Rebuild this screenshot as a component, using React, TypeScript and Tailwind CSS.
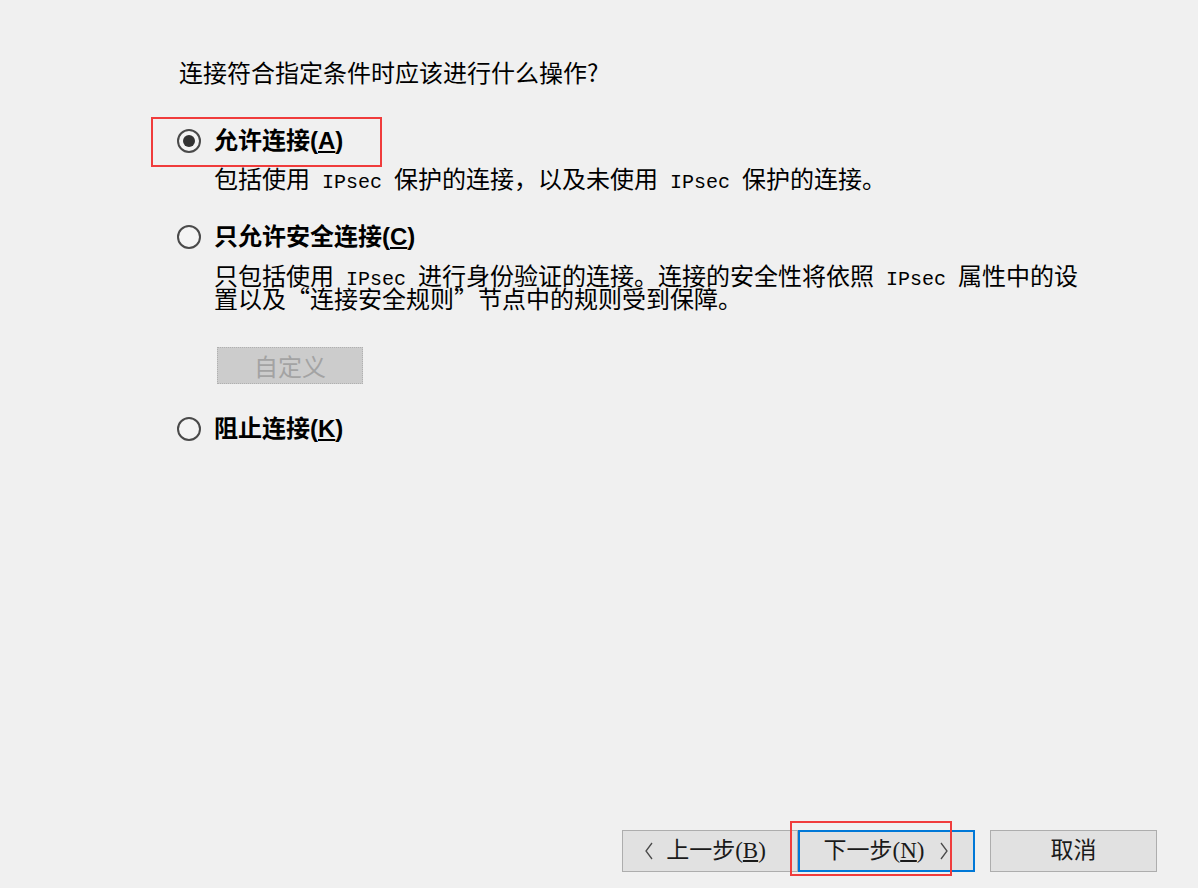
import React from "react"

const cjk = { fontFamily: "'Noto Sans CJK SC', sans-serif" }
const mono = { fontFamily: "'Liberation Mono', monospace" }
const btnFont = { fontFamily: "'Liberation Serif', 'Noto Sans CJK SC', serif" }

const IPsec = () => (
  <span className="text-[20px] leading-none" style={mono}>
    {" IPsec "}
  </span>
)

function Radio({ checked }: { checked?: boolean }) {
  return (
    <span className="flex h-[24px] w-[24px] shrink-0 items-center justify-center rounded-full border-2 border-[#4a4a4a] bg-[#f4f4f4]">
      {checked && <span className="h-[12px] w-[12px] rounded-full bg-[#333333]" />}
    </span>
  )
}

function Option({ label, accel, checked }: { label: string; accel: string; checked?: boolean }) {
  return (
    <div className="flex h-[28px] items-center">
      <Radio checked={checked} />
      <span className="ml-[13px] text-[24px] font-bold leading-[28px] text-black" style={{ fontFamily: "'Liberation Sans', 'Noto Sans CJK SC', sans-serif" }}>
        {label}(<span className="underline underline-offset-2">{accel}</span>)
      </span>
    </div>
  )
}

function Chevron({ dir }: { dir: "left" | "right" }) {
  return (
    <svg width="10" height="18" viewBox="0 0 10 18" className="shrink-0">
      <polyline
        points={dir === "left" ? "8,1 2,9 8,17" : "2,1 8,9 2,17"}
        fill="none"
        stroke="#4a4a4a"
        strokeWidth="1.3"
      />
    </svg>
  )
}

export default function App() {
  return (
    <div className="flex h-[888px] w-[1198px] flex-col bg-[#f0f0f0] text-black" style={cjk}>
      <div className="flex flex-col pl-[177px]">
        <div className="mt-[60px] h-[24px] pl-[2px] text-[24px] leading-[24px]">连接符合指定条件时应该进行什么操作?</div>

        <div className="relative mt-[43px]">
          <span className="pointer-events-none absolute left-[-26px] top-[-10px] h-[50px] w-[231px] border-2 border-[#f03c3c]" />
          <Option label="允许连接" accel="A" checked />
        </div>
        <div className="mt-[11px] h-[24px] whitespace-nowrap pl-[37px] text-[24px] leading-[24px]">
          包括使用<IPsec />保护的连接，以及未使用<IPsec />保护的连接。
        </div>

        <div className="mt-[33px]">
          <Option label="只允许安全连接" accel="C" />
        </div>
        <div className="mt-[12px] flex flex-col pl-[37px] text-[24px] leading-[24px]">
          <div className="h-[23px] whitespace-nowrap">
            只包括使用<IPsec />进行身份验证的连接。连接的安全性将依照<IPsec />属性中的设
          </div>
          <div className="h-[23px] whitespace-nowrap">置以及“连接安全规则”节点中的规则受到保障。</div>
        </div>

        <div className="mt-[38px] pl-[40px]">
          <div className="flex h-[37px] w-[146px] items-center justify-center border border-dotted border-[#b0b0b0] bg-[#cccccc] text-[24px] text-[#a3a3a3]">
            自定义
          </div>
        </div>

        <div className="mt-[31px]">
          <Option label="阻止连接" accel="K" />
        </div>
      </div>

      <div className="mt-auto mb-[16px] flex justify-end pr-[41px] text-[23px] text-[#1a1a1a]" style={btnFont}>
        <div className="flex h-[42px] w-[176px] items-center justify-center gap-[12px] border border-[#adadad] bg-[#e1e1e1] pr-[10px]">
          <Chevron dir="left" />
          <span>
            上一步(<span className="underline underline-offset-2">B</span>)
          </span>
        </div>
        <div className="relative">
          <div className="flex h-[42px] w-[177px] items-center justify-center gap-[15px] border-2 border-[#0078d7] bg-[#e1e1e1]">
            <span>
              下一步(<span className="underline underline-offset-2">N</span>)
            </span>
            <Chevron dir="right" />
          </div>
          <span className="pointer-events-none absolute left-[-8px] top-[-9px] h-[55px] w-[162px] border-2 border-[#f03c3c]" />
        </div>
        <div className="ml-[15px] flex h-[42px] w-[167px] items-center justify-center border border-[#adadad] bg-[#e1e1e1]">
          取消
        </div>
      </div>
    </div>
  )
}
